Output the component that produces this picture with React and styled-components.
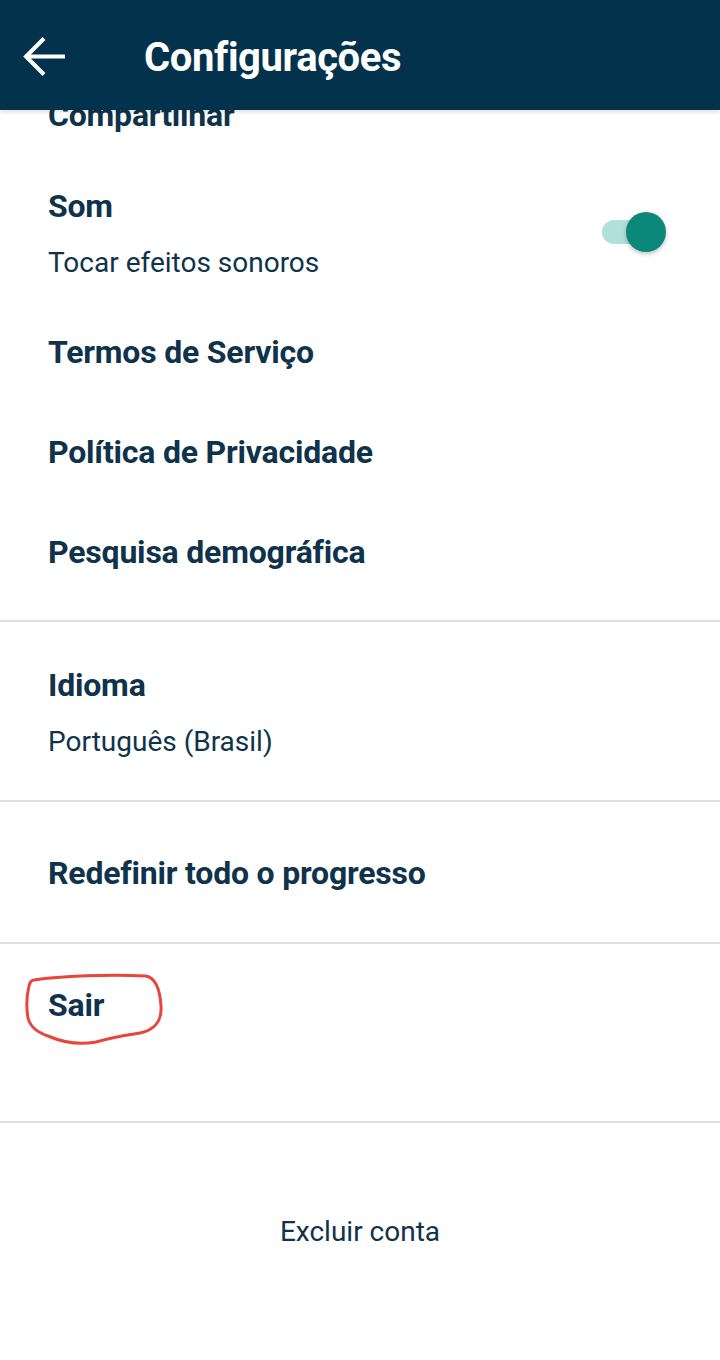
import React from 'react';
import styled, { createGlobalStyle } from 'styled-components';

const GlobalStyle = createGlobalStyle`
  html, body {
    margin: 0;
    padding: 0;
    background: #ffffff;
  }
  body {
    font-family: Roboto, "Liberation Sans", Arial, sans-serif;
    -webkit-font-smoothing: antialiased;
  }
`;

const Screen = styled.div`
  width: 720px;
  height: 1360px;
  display: flex;
  flex-direction: column;
  overflow: hidden;
  background: #fff;
`;

const TopBar = styled.header`
  position: relative;
  z-index: 2;
  height: 110px;
  box-sizing: border-box;
  padding-top: 6px;
  flex-shrink: 0;
  background: #03324c;
  display: flex;
  align-items: center;
  padding-left: 22px;
  gap: 76px;
  box-shadow: 0 2px 4px rgba(0, 0, 0, 0.12);
`;

const BackButton = styled.button`
  border: 0;
  background: none;
  padding: 0;
  width: 46px;
  height: 46px;
  display: flex;
  align-items: center;
  justify-content: center;
  cursor: pointer;
`;

const Title = styled.h1`
  margin: 0;
  color: #fff;
  font-size: 40px;
  font-weight: 700;
  letter-spacing: -0.4px;
  line-height: 46px;
`;

const Scroller = styled.div`
  flex: 1;
  overflow: hidden;
`;

const List = styled.div`
  margin-top: -45px;
`;

const Section = styled.section`
  padding: ${props => props.pad || '0'};
  border-bottom: ${props => props.last ? 'none' : '2px solid #dedede'};
`;

const Item = styled.div`
  position: relative;
  display: flex;
  align-items: center;
  justify-content: space-between;
  padding: ${props => props.pad || '32px 0'};
  padding-left: 48px;
  padding-right: 54px;
`;

const ItemText = styled.div`
  display: flex;
  flex-direction: column;
  gap: 21px;
`;

const ItemTitle = styled.div`
  color: #0f334b;
  font-size: 32px;
  font-weight: 700;
  line-height: 36px;
  letter-spacing: -0.2px;
`;

const ItemSub = styled.div`
  color: #0f334b;
  font-size: 28px;
  font-weight: 400;
  line-height: 36px;
`;

const Toggle = styled.div`
  position: relative;
  width: 64px;
  height: 40px;
  margin-top: -6px;
  display: flex;
  align-items: center;
`;

const Track = styled.div`
  width: 50px;
  height: 24px;
  margin-left: 0;
  border-radius: 12px;
  background: #b3dfda;
`;

const Thumb = styled.div`
  position: absolute;
  right: 0;
  top: 0;
  width: 40px;
  height: 40px;
  border-radius: 50%;
  background: #0b887a;
  box-shadow: 0 2px 4px rgba(0, 0, 0, 0.25);
`;

const Annotation = styled.svg`
  position: absolute;
  left: 0;
  pointer-events: none;
`;

const DangerLink = styled.div`
  text-align: center;
  color: #0f334b;
  font-size: 28px;
  line-height: 36px;
`;

const BackArrow = () => (
  <svg width="46" height="46" viewBox="0 0 46 46" fill="none">
    <path d="M4 21.5h39" stroke="#fff" strokeWidth="4" />
    <path d="M22 3.5L4 21.5l18 18" stroke="#fff" strokeWidth="4" />
  </svg>
);

const SettingsRow = ({ title, sub, pad, children }) => (
  <Item pad={pad}>
    <ItemText>
      <ItemTitle>{title}</ItemTitle>
      {sub && <ItemSub>{sub}</ItemSub>}
    </ItemText>
    {children}
  </Item>
);

const App = () => (
  <>
    <GlobalStyle />
    <Screen>
      <TopBar>
        <BackButton aria-label="Voltar">
          <BackArrow />
        </BackButton>
        <Title>Configurações</Title>
      </TopBar>
      <Scroller>
        <List>
          <Section pad="0 0 18px">
            <SettingsRow title="Compartilhar" pad="32px 0 23px" />
            <SettingsRow title="Som" sub="Tocar efeitos sonoros" pad="32px 0 21px">
              <Toggle>
                <Track />
                <Thumb />
              </Toggle>
            </SettingsRow>
            <SettingsRow title="Termos de Serviço" />
            <SettingsRow title="Política de Privacidade" />
            <SettingsRow title="Pesquisa demográfica" />
          </Section>
          <Section pad="45px 0 40px">
            <SettingsRow title="Idioma" sub="Português (Brasil)" pad="0" />
          </Section>
          <Section pad="53px 0 51px">
            <SettingsRow title="Redefinir todo o progresso" pad="0" />
          </Section>
          <Section pad="43px 0 98px">
            <SettingsRow title="Sair" pad="0">
              <Annotation width="180" height="90" viewBox="0 0 180 90" style={{ top: -27 }}>
                <path
                  d="M34 20 C60 16 110 14 146 16 C156 18 160 30 161 46 C162 60 155 70 140 73 C120 76 110 78 96 82 C80 85 62 82 48 76 C36 72 30 66 28 58 C26 46 27 34 29 26 C30 22 32 20 34 20 Z"
                  fill="none"
                  stroke="#e8453b"
                  strokeWidth="3"
                  strokeLinejoin="round"
                />
              </Annotation>
            </SettingsRow>
          </Section>
          <Section pad="91px 0 0" last>
            <DangerLink>Excluir conta</DangerLink>
          </Section>
        </List>
      </Scroller>
    </Screen>
  </>
);

export default App;
